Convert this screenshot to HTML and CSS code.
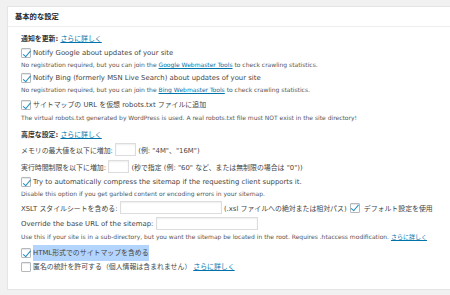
FILE: index.html
```html
<!DOCTYPE html>
<html>
<head>
    <title>基本的な設定</title>
    <link rel="stylesheet" href="styles.css">
</head>
<body>
    <div class="postbox">
        <h3 class="hndle">基本的な設定</h3>
        <div class="inside">
            <p class="sec"><b>通知を更新:</b> <a href="#">さらに詳しく</a></p>

            <label class="opt"><input type="checkbox" checked> Notify Google about updates of your site</label>
            <p class="desc">No registration required, but you can join the <a href="#">Google Webmaster Tools</a> to check crawling statistics.</p>

            <label class="opt"><input type="checkbox" checked> Notify Bing (formerly MSN Live Search) about updates of your site</label>
            <p class="desc">No registration required, but you can join the <a href="#">Bing Webmaster Tools</a> to check crawling statistics.</p>

            <label class="opt robots"><input type="checkbox" checked> サイトマップの URL を仮想 robots.txt ファイルに追加</label>
            <p class="desc robots-desc">The virtual robots.txt generated by WordPress is used. A real robots.txt file must NOT exist in the site directory!</p>

            <p class="sec adv"><b>高度な設定:</b> <a href="#">さらに詳しく</a></p>

            <div class="field first">メモリの最大値を以下に増加: <input type="text" class="num"> (例: "4M"、"16M")</div>
            <div class="field">実行時間制限を以下に増加: <input type="text" class="num"> (秒で指定 (例: "60" など、または無制限の場合は "0"))</div>

            <label class="opt compress"><input type="checkbox" checked> Try to automatically compress the sitemap if the requesting client supports it.</label>
            <p class="desc">Disable this option if you get garbled content or encoding errors in your sitemap.</p>

            <div class="field">XSLT スタイルシートを含める: <input type="text" class="wide"> (.xsl ファイルへの絶対または相対パス)<label><input type="checkbox" checked> デフォルト設定を使用</label></div>
            <div class="field short">Override the base URL of the sitemap: <input type="text" class="wide"></div>
            <p class="desc">Use this if your site is in a sub-directory, but you want the sitemap be located in the root. Requires .htaccess modification. <a href="#">さらに詳しく</a></p>

            <label class="opt html"><input type="checkbox" checked> <span class="sel">HTML形式でのサイトマップを含める</span></label>
            <label class="opt stats"><input type="checkbox"> 匿名の統計を許可する（個人情報は含まれません） <a href="#">さらに詳しく</a></label>
        </div>
    </div>
</body>
</html>
```

FILE: styles.css
```css
body {
    margin: 0;
    padding: 6px 0 0 7px;
    background: #f1f1f1;
    font-family: "DejaVu Sans", "Noto Sans CJK JP", sans-serif;
    font-size: 6.9px;
    color: #444;
    overflow: hidden;
}
a {
    color: #0073aa;
}
.postbox {
    width: 460px;
    height: 282px;
    background: #fff;
    border: 1px solid #e5e5e5;
    box-shadow: 0 1px 1px rgba(0, 0, 0, 0.04);
}
.hndle {
    margin: 0;
    padding: 0 7px;
    height: 19px;
    line-height: 19px;
    font-size: 7.3px;
    font-weight: 600;
    color: #23282d;
    border-bottom: 1px solid #eee;
}
.inside {
    padding: 6px 0 0 13px;
}
.sec {
    margin: 0;
    line-height: 12px;
}
.sec b {
    font-weight: 600;
    color: #333;
}
.adv {
    margin-top: 6px;
}
.opt {
    display: flex;
    align-items: center;
    gap: 2px;
    margin-top: 2px;
    line-height: 12px;
}
.robots {
    margin-top: 4px;
}
.compress {
    margin-top: 1px;
}
.html {
    margin-top: 3px;
}
.stats {
    margin-top: 0;
}
.desc {
    margin: 0;
    line-height: 11px;
    font-size: 6px;
    color: #555;
}
.robots-desc {
    margin-top: 1px;
}
.field {
    display: flex;
    align-items: center;
    white-space: pre;
    height: 17px;
}
.field.short {
    height: 15px;
}
.field label {
    display: flex;
    align-items: center;
    gap: 2px;
    margin-left: 3px;
}
input[type="checkbox"] {
    appearance: none;
    margin: 0;
    width: 10px;
    height: 10px;
    border: 1px solid #b4b9be;
    border-radius: 1px;
    background: #fff;
    box-shadow: inset 0 1px 1px rgba(0, 0, 0, 0.1);
    position: relative;
    flex: none;
}
input[type="checkbox"]:checked::before {
    content: "";
    position: absolute;
    left: 2.5px;
    top: -0.5px;
    width: 3px;
    height: 6.5px;
    border: solid #1e8cbe;
    border-width: 0 1.6px 1.6px 0;
    transform: rotate(40deg);
}
input[type="text"] {
    margin: 0;
    padding: 0 2px;
    height: 13px;
    border: 1px solid #ddd;
    box-shadow: inset 0 1px 2px rgba(0, 0, 0, 0.07);
    box-sizing: border-box;
    font: inherit;
}
.num {
    width: 21px;
}
.wide {
    width: 102px;
}
.sel {
    background: #b3d4fc;
    padding: 2px 0;
}
```
